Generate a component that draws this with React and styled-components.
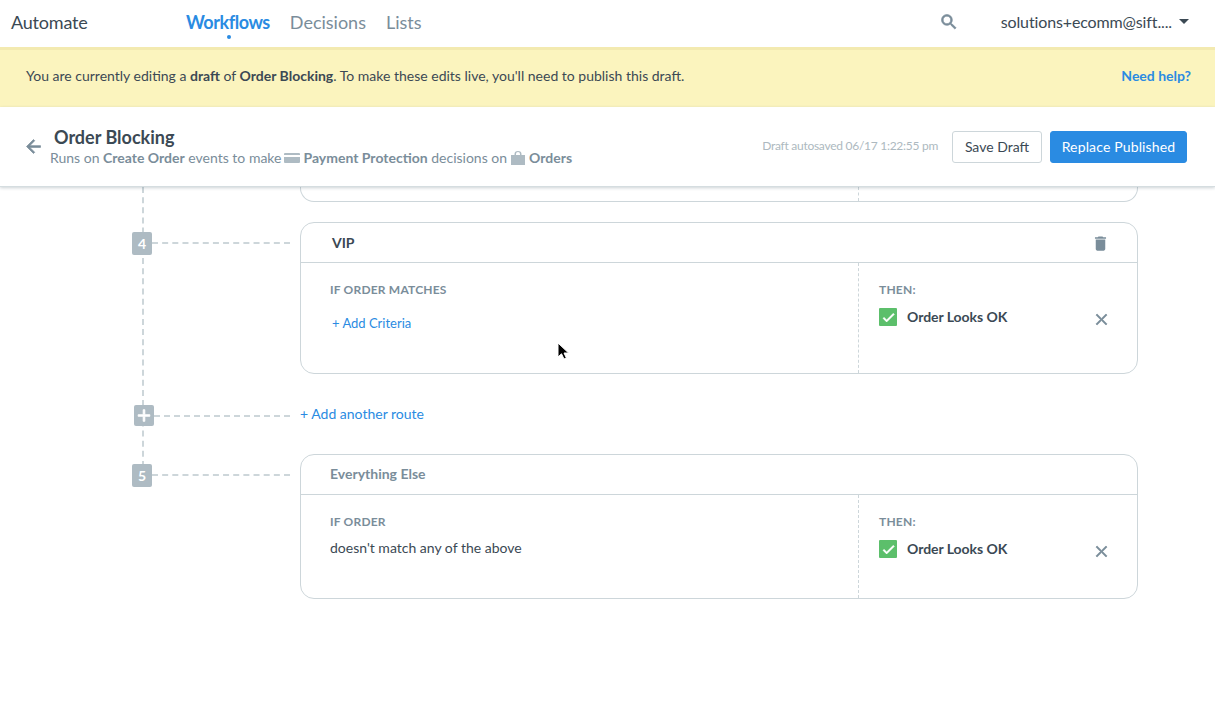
import React from "react"
import styled, { createGlobalStyle } from "styled-components"
import { MdArrowBack, MdSearch, MdDelete, MdClose, MdCheck, MdAdd } from "react-icons/md"

const colors = {
  ink: "#3b4954",
  slate: "#7a8d9a",
  blue: "#2a8be2",
  line: "#cdd6da",
  badge: "#aebbc3",
}

// thickens a material icon, skipping its empty bounding-box path
const boldIcon = (width) => `
  svg path:not([fill="none"]) {
    stroke: currentColor;
    stroke-width: ${width};
  }
`

const GlobalStyle = createGlobalStyle`
  html, body {
    margin: 0;
    height: 100%;
    overflow: hidden;
    background: #fff;
  }
  body {
    font-family: "Lato", "Liberation Sans", sans-serif;
    color: ${colors.ink};
  }
  * {
    box-sizing: border-box;
  }
`

const Page = styled.div`
  position: relative;
  height: 721px;
  overflow: hidden;
`

const TopNav = styled.nav`
  display: flex;
  align-items: center;
  height: 47px;
  padding: 0 26px 4px 11px;
  background: #fff;
`

const Brand = styled.div`
  width: 175px;
  font-size: 18px;
  letter-spacing: -0.2px;
`

const NavLinks = styled.div`
  display: flex;
  gap: 20px;
  flex: 1;
`

const NavLink = styled.a`
  position: relative;
  font-size: 18px;
  color: ${(p) => (p.$active ? colors.blue : colors.slate)};
  font-weight: ${(p) => (p.$active ? 700 : 400)};
  letter-spacing: ${(p) => (p.$active ? "-0.45px" : "0")};

  ${(p) =>
    p.$active &&
    `&::after {
      content: "";
      position: absolute;
      left: 50%;
      bottom: -6px;
      width: 4px;
      height: 4px;
      margin-left: -1px;
      border-radius: 50%;
      background: ${colors.blue};
    }`}
`

const SearchButton = styled.span`
  display: flex;
  margin-right: 42px;
  color: ${colors.slate};
  font-size: 20px;
  ${boldIcon(0.8)}
`

const UserMenu = styled.div`
  display: flex;
  align-items: center;
  gap: 7px;
  font-size: 16px;
  letter-spacing: -0.13px;
`

const Caret = styled.span`
  width: 0;
  height: 0;
  border-left: 5px solid transparent;
  border-right: 5px solid transparent;
  border-top: 5px solid ${colors.ink};
`

const Banner = styled.div`
  display: flex;
  align-items: center;
  justify-content: space-between;
  height: 60px;
  padding: 0 24px 6px 26px;
  background: #fbf4be;
  border-top: 3px solid #f3eab0;
  font-size: 14px;

  b {
    font-weight: 700;
  }
`

const HelpLink = styled.a`
  color: ${colors.blue};
  font-weight: 700;
`

const Header = styled.header`
  position: relative;
  z-index: 2;
  display: flex;
  align-items: center;
  height: 80px;
  padding: 0 28px 0 25px;
  background: #fff;
  border-bottom: 1px solid #d5dde0;
  box-shadow: 0 1px 3px rgba(90, 110, 120, 0.3);
`

const BackArrow = styled.span`
  display: flex;
  flex: none;
  width: 27px;
  margin: -1px 0 0 -2px;
  color: ${colors.slate};
  font-size: 21px;
  ${boldIcon(0.8)}
`

const Titles = styled.div`
  flex: 1;
  margin-top: -1px;
`

const Title = styled.h1`
  margin: 0 0 1px 4px;
  font-size: 18px;
  line-height: 22px;
  font-weight: 700;
`

const Subtitle = styled.div`
  display: flex;
  align-items: center;
  font-size: 14px;
  line-height: 18px;
  color: ${colors.slate};
  white-space: pre;

  b {
    font-weight: 700;
  }
`

const SubIcon = styled.svg`
  width: ${(p) => (p.$bag ? 14 : 16)}px;
  height: 14px;
  margin: 0 ${(p) => (p.$bag ? "4px" : "3px")};
  fill: ${colors.badge};
`

const Saved = styled.span`
  margin: 0 14px 2px 0;
  font-size: 12px;
  letter-spacing: -0.27px;
  color: #adb9c0;
`

const Button = styled.button`
  height: 32px;
  padding: 0 0 1px;
  width: ${(p) => (p.$primary ? "137px" : "90px")};
  margin-left: ${(p) => (p.$primary ? "8px" : "0")};
  border: 1px solid ${(p) => (p.$primary ? colors.blue : colors.line)};
  border-radius: 3px;
  background: ${(p) => (p.$primary ? colors.blue : "#fff")};
  color: ${(p) => (p.$primary ? "#fff" : colors.ink)};
  font: 400 14px "Lato", "Liberation Sans", sans-serif;
  letter-spacing: ${(p) => (p.$primary ? "0.15px" : "0")};
`

const Timeline = styled.main`
  position: relative;
  padding-left: 132px;
  width: 1138px;
`

const RailLine = styled.div`
  position: absolute;
  left: 142px;
  top: 0;
  height: 280px;
  border-left: 2px dashed ${colors.line};
`

const PartialCard = styled.div`
  display: grid;
  grid-template-columns: 558px 1fr;
  height: 15px;
  margin: 0 0 20px 168px;
  border: 1px solid ${colors.line};
  border-top: 0;
  border-radius: 0 0 14px 14px;
`

const PartialCell = styled.div`
  border-right: 1px dashed ${colors.line};
`

const Row = styled.div`
  position: relative;
  display: flex;
  align-items: flex-start;
  margin-bottom: ${(p) => p.$gap || 0}px;
`

const Rail = styled.div`
  display: flex;
  align-items: center;
  flex: none;
  width: 168px;
  height: ${(p) => p.$height || 41}px;
  padding: ${(p) => (p.$plus ? "0 10px 0 2px" : "0 10px 0 0")};
`

const Badge = styled.span`
  position: relative;
  display: flex;
  align-items: center;
  justify-content: center;
  flex: none;
  width: 20px;
  height: ${(p) => (p.$plus ? 21 : 23)}px;
  margin-top: ${(p) => (p.$plus ? 0 : 1)}px;
  border-radius: 2px;
  background: ${colors.badge};
  color: #fff;
  font-size: ${(p) => (p.$plus ? 23 : 14)}px;
  font-weight: 700;
  ${boldIcon(1)}
`

const Dash = styled.span`
  flex: 1;
  border-top: 2px dashed ${colors.line};
`

const Card = styled.section`
  flex: 1;
  border: 1px solid ${colors.line};
  border-radius: 14px;
`

const CardHead = styled.div`
  display: flex;
  align-items: center;
  justify-content: space-between;
  height: 40px;
  padding: ${(p) => (p.$muted ? "0 27px 2px 29px" : "0 27px 0 31px")};
  border-bottom: 1px solid ${colors.line};
  font-size: 14px;
  font-weight: 700;
  color: ${(p) => (p.$muted ? colors.slate : colors.ink)};
`

const TrashIcon = styled.span`
  display: flex;
  margin-top: 2px;
  color: ${colors.slate};
  font-size: 19px;
`

const CardBody = styled.div`
  display: grid;
  grid-template-columns: 558px 1fr;
  height: ${(p) => p.$height}px;
`

const Criteria = styled.div`
  padding: 20px 29px;
  border-right: 1px dashed ${colors.line};
`

const Label = styled.div`
  font-size: 12px;
  line-height: 14px;
  font-weight: 700;
  letter-spacing: 0.2px;
  color: ${colors.slate};
`

const AddCriteria = styled.a`
  display: block;
  margin: 18px 0 0 2px;
  font-size: 13px;
  line-height: 16px;
  color: ${colors.blue};
`

const MatchText = styled.div`
  margin-top: 10px;
  font-size: 14px;
  line-height: 18px;
`

const Outcome = styled.div`
  padding: 20px 26px 0 20px;
`

const OutcomeRow = styled.div`
  display: flex;
  align-items: center;
  margin-top: 8px;
  font-size: 14px;
  font-weight: 700;
`

const CheckBox = styled.span`
  display: flex;
  align-items: center;
  justify-content: center;
  width: 18px;
  height: 18px;
  margin-right: 10px;
  border-radius: 1px;
  background: #5cbf6b;
  color: #fff;
  font-size: 15px;
  ${boldIcon(1.4)}
`

const OutcomeName = styled.span`
  margin-top: -1px;
  letter-spacing: -0.05px;
`

const RemoveIcon = styled.span`
  display: flex;
  margin: 5px 0 0 auto;
  color: ${colors.slate};
  font-size: 19px;
  ${boldIcon(0.8)}
`

const AddRoute = styled.a`
  font-size: 14px;
  line-height: 18px;
  color: ${colors.blue};
`

const Cursor = styled.svg`
  position: absolute;
  left: 557px;
  top: 342px;
  width: 13px;
  height: 19px;
`

function Route({ number, name, muted, label, bodyHeight, gap, children }) {
  return (
    <Row $gap={gap}>
      <Rail>
        <Badge>{number}</Badge>
        <Dash />
      </Rail>
      <Card>
        <CardHead $muted={muted}>
          {name}
          {!muted && (
            <TrashIcon>
              <MdDelete />
            </TrashIcon>
          )}
        </CardHead>
        <CardBody $height={bodyHeight}>
          <Criteria>
            <Label>{label}</Label>
            {children}
          </Criteria>
          <Outcome>
            <Label>THEN:</Label>
            <OutcomeRow>
              <CheckBox>
                <MdCheck />
              </CheckBox>
              <OutcomeName>Order Looks OK</OutcomeName>
              <RemoveIcon>
                <MdClose />
              </RemoveIcon>
            </OutcomeRow>
          </Outcome>
        </CardBody>
      </Card>
    </Row>
  )
}

export default function App() {
  return (
    <Page>
      <GlobalStyle />
      <TopNav>
        <Brand>Automate</Brand>
        <NavLinks>
          <NavLink $active>Workflows</NavLink>
          <NavLink>Decisions</NavLink>
          <NavLink>Lists</NavLink>
        </NavLinks>
        <SearchButton>
          <MdSearch />
        </SearchButton>
        <UserMenu>
          solutions+ecomm@sift....
          <Caret />
        </UserMenu>
      </TopNav>

      <Banner>
        <span>
          You are currently editing a <b>draft</b> of <b>Order Blocking</b>. To make these edits
          live, you'll need to publish this draft.
        </span>
        <HelpLink>Need help?</HelpLink>
      </Banner>

      <Header>
        <BackArrow>
          <MdArrowBack />
        </BackArrow>
        <Titles>
          <Title>Order Blocking</Title>
          <Subtitle>
            Runs on <b>Create Order</b> events to make
            <SubIcon viewBox="0 0 16 14">
              <path d="M1 2h14a1 1 0 0 1 1 1v1H0V3a1 1 0 0 1 1-1zM0 6h16v5a1 1 0 0 1-1 1H1a1 1 0 0 1-1-1z" />
            </SubIcon>
            <b>Payment Protection</b> decisions on
            <SubIcon $bag viewBox="0 0 14 14">
              <path d="M0 4h3.5V3a3.5 3 0 0 1 7 0v1H14v10H0zM5 4h4V3a2 2 0 0 0-4 0z" />
            </SubIcon>
            <b>Orders</b>
          </Subtitle>
        </Titles>
        <Saved>Draft autosaved 06/17 1:22:55 pm</Saved>
        <Button>Save Draft</Button>
        <Button $primary>Replace Published</Button>
      </Header>

      <Timeline>
        <RailLine />
        <PartialCard>
          <PartialCell />
        </PartialCard>

        <Route number="4" name="VIP" label="IF ORDER MATCHES" bodyHeight={110} gap={31}>
          <AddCriteria>+ Add Criteria</AddCriteria>
        </Route>

        <Row $gap={28}>
          <Rail $height={21} $plus>
            <Badge $plus>
              <MdAdd />
            </Badge>
            <Dash />
          </Rail>
          <AddRoute>+ Add another route</AddRoute>
        </Row>

        <Route number="5" name="Everything Else" muted label="IF ORDER" bodyHeight={103}>
          <MatchText>doesn't match any of the above</MatchText>
        </Route>
      </Timeline>

      <Cursor viewBox="0 0 13 19">
        <path d="M1 1v14l3.5-3.2L7 17l2.4-1-2.4-5h4.6z" fill="#000" stroke="#fff" strokeWidth="1" />
      </Cursor>
    </Page>
  )
}
